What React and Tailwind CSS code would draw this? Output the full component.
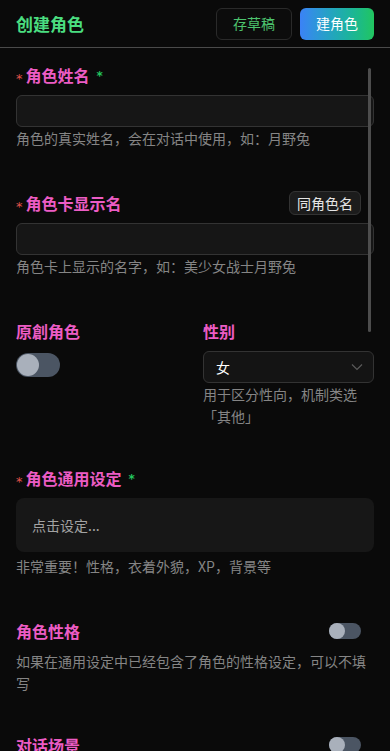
import React from "react";

const font = { fontFamily: '"Noto Sans CJK SC", "Noto Sans", sans-serif' };
const starFont = { fontFamily: '"DejaVu Sans", sans-serif' };

function Label({ children, req, greenStar }) {
  return (
    <div className="flex items-center h-6">
      {req && (
        <span className="text-[#e0524a] text-[13px] mr-[3px] leading-none mt-[6px]" style={starFont}>
          *
        </span>
      )}
      <span className="text-[#ec5cc4] text-[16px] font-bold leading-6">{children}</span>
      {greenStar && (
        <span className="text-[#22c55e] text-[12px] ml-[7px] leading-none mt-[2px] font-bold" style={starFont}>
          *
        </span>
      )}
    </div>
  );
}

function Help({ children, className = "" }) {
  return <p className={"text-[14px] leading-[22px] text-[#858585] " + className}>{children}</p>;
}

function Toggle({ small }) {
  if (small) {
    return (
      <div className="w-8 h-4 rounded-full bg-[#4b5563] flex items-center">
        <div className="w-4 h-4 rounded-full bg-[#a9b0bb]" />
      </div>
    );
  }
  return (
    <div className="w-11 h-6 rounded-full bg-[#4b5563] flex items-center px-[1px]">
      <div className="w-[22px] h-[22px] rounded-full bg-[#a9b0bb]" />
    </div>
  );
}

export default function App() {
  return (
    <div className="relative w-[390px] h-[751px] overflow-hidden bg-[#0a0a0a]" style={font}>
      <header className="h-12 flex items-center justify-between px-4 border-b border-[#4a4a4a]">
        <h1 className="text-[#4ade80] text-[17px] font-bold leading-none">创建角色</h1>
        <div className="flex items-center gap-2">
          <button className="w-[76px] h-8 rounded-md border border-[#2a2a2a] bg-[#0c0c0c] text-[#4cc36e] text-[14px]">存草稿</button>
          <button className="w-[74px] h-8 rounded-md bg-gradient-to-r from-[#3b82f6] to-[#22c55e] text-white text-[14px]">建角色</button>
        </div>
      </header>

      <div className="px-4">
        {/* 角色姓名 */}
        <div className="pt-[15px]">
          <Label req greenStar>角色姓名</Label>
          <div className="mt-2 h-8 rounded-md border border-[#333] bg-[#161616]" />
          <Help>角色的真实姓名，会在对话中使用，如：月野兔</Help>
        </div>

        {/* 角色卡显示名 */}
        <div className="mt-[42px]">
          <div className="flex items-center justify-between pr-[13px]">
            <Label req>角色卡显示名</Label>
            <button className="h-6 px-[7px] rounded-md border border-[#333] bg-[#1c1c1c] text-[#e5e5e5] text-[14px] leading-none">同角色名</button>
          </div>
          <div className="mt-2 h-8 rounded-md border border-[#333] bg-[#161616]" />
          <Help>角色卡上显示的名字，如：美少女战士月野兔</Help>
        </div>

        {/* 原創角色 / 性别 */}
        <div className="mt-[42px] grid grid-cols-2 gap-4">
          <div>
            <Label>原創角色</Label>
            <div className="mt-[10px]">
              <Toggle />
            </div>
          </div>
          <div>
            <Label>性别</Label>
            <div className="mt-2 h-8 rounded-md border border-[#333] bg-[#141414] flex items-center justify-between pl-3 pr-[10px]">
              <span className="text-white text-[14px]">女</span>
              <svg width="12" height="8" viewBox="0 0 12 8" fill="none">
                <path d="M1 1.5 L6 6.5 L11 1.5" stroke="#5a5a5a" strokeWidth="1.2" />
              </svg>
            </div>
            <Help>用于区分性向，机制类选「其他」</Help>
          </div>
        </div>

        {/* 角色通用设定 */}
        <div className="mt-[39px]">
          <Label req greenStar>角色通用设定</Label>
          <div className="mt-2 h-[54px] rounded-lg bg-[#171717] flex items-center px-4">
            <span className="text-[#a3a3a3] text-[14px]">点击设定...</span>
          </div>
          <Help className="mt-[3px]">非常重要！性格，衣着外貌，XP，背景等</Help>
        </div>

        {/* 角色性格 */}
        <div className="mt-[42px]">
          <div className="flex items-center justify-between pr-[13px]">
            <Label>角色性格</Label>
            <Toggle small />
          </div>
          <Help className="mt-[7px]">如果在通用设定中已经包含了角色的性格设定，可以不填写</Help>
        </div>

        {/* 对话场景 */}
        <div className="mt-[39px]">
          <div className="flex items-center justify-between pr-[13px]">
            <Label>对话场景</Label>
            <Toggle small />
          </div>
        </div>
      </div>

      <div className="absolute left-[368px] top-[68px] w-[3px] h-[264px] rounded-full bg-[#4d4d4d]" />
    </div>
  );
}
